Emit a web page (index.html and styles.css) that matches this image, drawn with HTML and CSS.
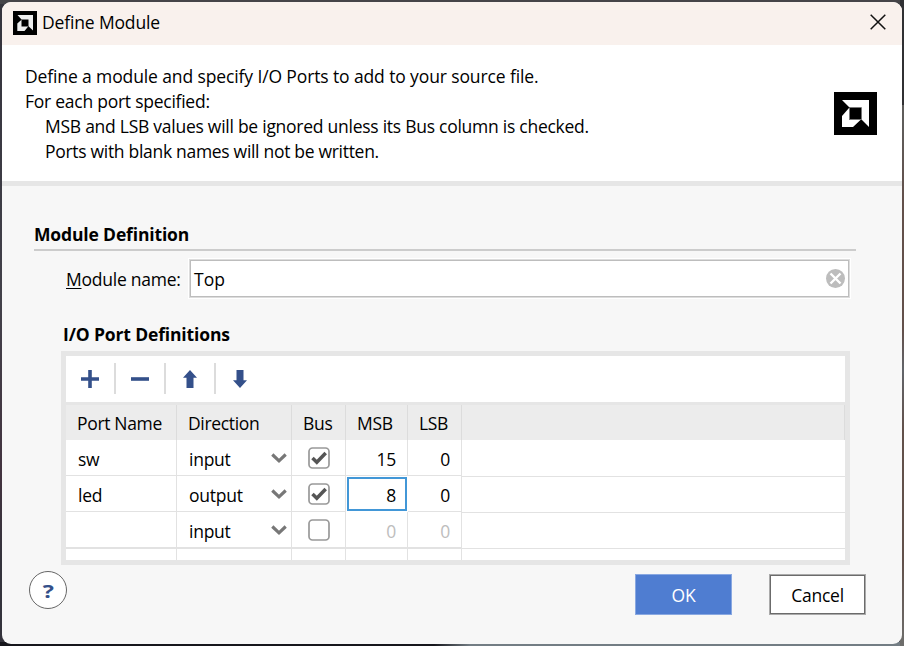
FILE: index.html
```html
<!DOCTYPE html>
<html lang="en">
<head>
<meta charset="utf-8">
<title>Define Module</title>
<link rel="stylesheet" href="styles.css">
</head>
<body>
<main class="dialog">
  <header class="titlebar">
    <svg class="app-icon" viewBox="0 0 24 24"><path fill="#000" d="M0 0h24v24H0z"/><path fill="#eee" d="M4.500 4H20v15.500l-4.500-4.200V8.500H8.500zM4.300 12.500L8.500 8.800v6.700h6.700L11.500 20H4.300z"/></svg>
    <h1 class="title">Define Module</h1>
    <svg class="close" viewBox="0 0 16 16"><path d="M.7.7l14.6 14.6M15.3.7L.7 15.3"/></svg>
  </header>

  <section class="intro">
    <div class="intro-text">
      <p class="l1">Define a module and specify I/O Ports to add to your source file.</p>
      <p class="l2">For each port specified:</p>
      <p class="l3">MSB and LSB values will be ignored unless its Bus column is checked.</p>
      <p class="l4">Ports with blank names will not be written.</p>
    </div>
    <svg class="logo" viewBox="0 0 43 43"><path fill="#000" d="M0 0h43v43H0z"/><path fill="#fff" d="M8 8h27v27l-8-8V15H15zM8 24l7-8v11.500h12L19 35H8z"/><path fill="none" stroke="#777" d="M15.5 15.5h12v12h-12z"/></svg>
  </section>

  <section class="content">
    <h2 class="section-title">Module Definition</h2>
    <div class="name-row">
      <label class="name-label"><u>M</u>odule name:</label>
      <div class="name-input">
        <span>Top</span>
        <svg class="clear" viewBox="0 0 19 19"><circle cx="9.5" cy="9.5" r="9.5" fill="#bdbdbd"/><path d="M4.5 4.5l10 10M14.5 4.5l-10 10" stroke="#fff" stroke-width="2.4"/></svg>
      </div>
    </div>
    <h3 class="ports-title">I/O Port Definitions</h3>
    <div class="ports">
      <div class="toolbar">
        <span class="tool"><svg viewBox="0 0 20 20"><path d="M8.200 1h3.600v7.200H19v3.600h-7.200V19H8.200v-7.200H1V8.200h7.200z"/></svg></span>
        <span class="tool"><svg viewBox="0 0 20 20"><path d="M1 8.200h18v3.600H1z"/></svg></span>
        <span class="tool"><svg viewBox="0 0 20 20"><path d="M10 1l7 7.700h-3.500V19h-7V8.700H3z"/></svg></span>
        <span class="tool"><svg viewBox="0 0 20 20"><path d="M10 19l7-7.700h-3.500V1h-7v10.300H3z"/></svg></span>
      </div>
      <div class="table">
        <div class="grid">
          <div class="row head"><span>Port Name</span><span>Direction</span><span>Bus</span><span>MSB</span><span>LSB</span></div>
          <div class="row">
            <span>sw</span>
            <span class="dir">input<svg class="chev" viewBox="0 0 16 10"><path d="M1.300 1.500L8 7.800l6.700-6.300"/></svg></span>
            <span class="check"><svg viewBox="0 0 22 22"><rect x="1" y="1" width="20" height="20" rx="3.500"/><path d="M4.500 11l4.300 4.300L17.700 6"/></svg></span>
            <span class="num">15</span><span class="num">0</span>
          </div>
          <div class="row">
            <span>led</span>
            <span class="dir">output<svg class="chev" viewBox="0 0 16 10"><path d="M1.300 1.500L8 7.800l6.700-6.300"/></svg></span>
            <span class="check"><svg viewBox="0 0 22 22"><rect x="1" y="1" width="20" height="20" rx="3.500"/><path d="M4.500 11l4.300 4.300L17.700 6"/></svg></span>
            <span class="num editing">8</span><span class="num">0</span>
          </div>
          <div class="row last">
            <span></span>
            <span class="dir">input<svg class="chev" viewBox="0 0 16 10"><path d="M1.300 1.500L8 7.800l6.700-6.300"/></svg></span>
            <span class="check"><svg viewBox="0 0 22 22"><rect x="1" y="1" width="20" height="20" rx="3.500"/></svg></span>
            <span class="num off">0</span><span class="num off">0</span>
          </div>
          <div class="row stub"><span></span><span></span><span></span><span></span><span></span></div>
        </div>
        <div class="filler"><div class="filler-head"></div><div class="filler-row"></div><div class="filler-row"></div><div class="filler-row"></div></div>
      </div>
    </div>
    <footer class="actions">
      <button class="help"><span>?</span></button>
      <button class="btn ok">OK</button>
      <button class="btn cancel">Cancel</button>
    </footer>
  </section>
</main>
</body>
</html>
```
FILE: styles.css
```css
* { box-sizing: border-box; }
body {
  margin: 0;
  width: 904px;
  height: 646px;
  padding: 2px;
  overflow: hidden;
  font: 17.5px/25px "Open Sans", "Noto Sans", sans-serif;
  letter-spacing: -0.25px;
  color: #000;
  background:
    linear-gradient(#303033 0 105px, #5f5d5b 105px 125px, #63504b 200px 330px, #62656a 370px, #62514b 430px 560px, #6e6e6c 646px) right / 4px 100% no-repeat,
    linear-gradient(90deg, #16161c 0 48%, #737d84 52%) bottom / 100% 4px no-repeat,
    linear-gradient(#454448, #454448) top / 100% 4px no-repeat,
    linear-gradient(#34333c, #42414a 300px, #42333f 480px, #34333c 560px);
}
h1, h2, h3, p { margin: 0; font-size: inherit; font-weight: normal; }
svg { display: block; flex: none; }
button { font: inherit; letter-spacing: inherit; padding: 0; color: #000; }

.dialog {
  width: 900px;
  height: 642px;
  border-radius: 9px;
  overflow: hidden;
  background: #f7f7f7;
}
.titlebar {
  height: 43px;
  display: flex;
  align-items: center;
  padding: 0 16px 2px 11px;
  background: #f9f1ed;
}
.app-icon { width: 24px; height: 24px; }
.title { margin-left: 5px; flex: 1; letter-spacing: -0.15px; }
.close { width: 16px; height: 16px; margin-top: -1px; fill: none; stroke: #111; stroke-width: 1.5; }

.intro {
  height: 141px;
  display: flex;
  justify-content: space-between;
  padding: 19px 25px 0 23px;
  background: #fff;
  border-bottom: 5px solid #e6e6e6;
}
.intro p { white-space: nowrap; }
.intro .l1 { letter-spacing: -0.12px; }
.l3, .l4 { padding-left: 20px; }
.intro .l3 { letter-spacing: -0.26px; }
.intro .l4 { letter-spacing: -0.3px; }
.logo { width: 43px; height: 43px; margin-top: 28px; }

.content { padding: 36px 37px 0 32px; }
.section-title {
  width: 822px;
  height: 29px;
  border-bottom: 2px solid #ccc;
  font-weight: bold;
  letter-spacing: -0.15px;
}
.name-row { display: flex; margin: 7px 0 0 32px; height: 41px; align-items: center; }
.name-label { width: 122px; padding-top: 1px; white-space: nowrap; }
u { text-decoration-thickness: 1px; text-underline-offset: 2px; }
.name-input {
  width: 663px;
  height: 41px;
  border: 1px solid #fff;
  background: #fff;
  box-shadow: inset 0 0 0 1px #dcdcdc, inset 0 0 0 2px #bdbdbd;
  display: flex;
  align-items: center;
  justify-content: space-between;
  padding: 1px 5px 0 5px;
}
.name-input span { letter-spacing: 0; }
.clear { width: 19px; height: 19px; margin-top: -2px; }
.ports-title { margin: 23px 0 0 29px; font-weight: bold; letter-spacing: -0.14px; }
.ports {
  width: 789px;
  height: 214px;
  margin: 4px 0 0 27px;
  border: 5px solid #e6e6e6;
  background: #fff;
}
.toolbar { height: 49px; padding-top: 7px; display: flex; border-bottom: 3px solid #e6e6e6; }
.tool {
  width: 50px;
  height: 31px;
  display: flex;
  align-items: center;
  justify-content: center;
  border-right: 2px solid #dcdcdc;
}
.tool:last-child { border-right-color: transparent; }
.tool svg { width: 20px; height: 20px; fill: #34508a; }

.table { display: flex; height: 155px; }
.grid { width: 396px; }
.row { display: grid; grid-template-columns: 111px 115px 54px 62px 54px; height: 36px; }
.row > span {
  display: flex;
  align-items: center;
  padding: 3px 11px 0 12px;
  border-right: 1px solid #e2e2e2;
  border-bottom: 1px solid #e2e2e2;
}
.row.head { height: 35px; background: #ececec; letter-spacing: -0.33px; }
.row.head > span { border-bottom: 0; padding: 2px 0 0 11px; border-right-color: #dcdcdc; }
.row.last { height: 37px; }
.row.last > span { border-bottom-width: 2px; }
.row.stub { height: 11px; }
.row.stub > span { border-bottom: 0; padding: 0; }
.row > .dir { justify-content: space-between; padding-right: 4px; }
.chev { width: 16px; height: 10px; margin-top: -3px; fill: none; stroke: #777; stroke-width: 3.2; }
.row > .check { padding: 1px 0 0; justify-content: center; }
.check svg { width: 22px; height: 22px; }
.check rect { fill: #fff; stroke: #999; stroke-width: 1.7; }
.check path { fill: none; stroke: #555; stroke-width: 3.5; }
.row > .num { justify-content: flex-end; }
.row > .off { color: #bdbdbd; }
.row > .editing { border: 2px solid #4297d7; margin: 1px; padding: 2px 9px 0 0; }
.filler { flex: 1; }
.filler-head { height: 35px; background: #ececec; border-right: 1px solid #dcdcdc; }
.filler-row { height: 36px; border-bottom: 1px solid #e2e2e2; }
.filler-row:nth-child(2) { height: 37px; }

.actions { display: flex; margin: 6px 0 0 -5px; }
.help {
  flex: none;
  width: 38px;
  height: 38px;
  border: 1px solid #666;
  border-radius: 50%;
  background: #fff;
  color: #34508a;
  font-weight: bold;
  font-size: 18px;
}
.help span { display: inline-block; transform: translateY(1px) scaleX(1.3); }
.btn { flex: none; width: 97px; height: 41px; margin-top: 3px; padding-top: 2px; }
.ok { margin-left: 568px; color: #fff; background: #4f7dd1; border: 1px solid #89a8e1; }
.cancel { margin-left: 37px; background: #fff; border: 1px solid #aaa; box-shadow: inset 0 0 0 1px #6b6b6b; }
```
